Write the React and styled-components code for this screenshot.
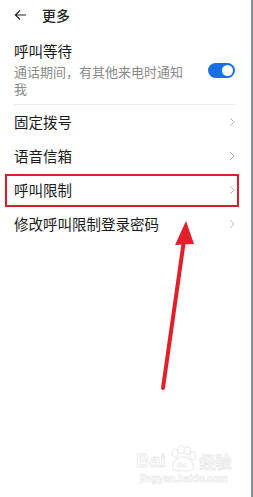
import styled, { createGlobalStyle } from "styled-components";

const GlobalStyle = createGlobalStyle`
  html, body {
    margin: 0;
    padding: 0;
    background: #fff;
  }
  body {
    font-family: "Noto Sans CJK SC", "Noto Sans", sans-serif;
    color: #1f1f1f;
  }
`;

const rows = [
  { label: "固定拨号" },
  { label: "语音信箱" },
  { label: "呼叫限制", marked: true },
  { label: "修改呼叫限制登录密码" },
];

const App = () => {
  return (
    <Page>
      <GlobalStyle />
      <Header>
        <BackIcon viewBox="0 0 14 12">
          <path d="M13 6H1.5M6.5 1L1.5 6l5 5" fill="none" stroke="#222" strokeWidth="1.3" />
        </BackIcon>
        <Title>更多</Title>
      </Header>

      <List>
        <SwitchRow>
          <div>
            <RowTitle>呼叫等待</RowTitle>
            <SubText>通话期间，有其他来电时通知我</SubText>
          </div>
          <Toggle>
            <Knob />
          </Toggle>
        </SwitchRow>
        <Divider />
        {rows.map((row) => (
          <Row key={row.label} $marked={row.marked}>
            <RowTitle>{row.label}</RowTitle>
            <Chevron viewBox="0 0 6 10">
              <path d="M1 1l4 4-4 4" fill="none" stroke="#b5b5b5" strokeWidth="1" />
            </Chevron>
          </Row>
        ))}
      </List>

      <Arrow viewBox="0 0 253 497">
        <line x1="163" y1="388" x2="184" y2="240" stroke="#e3202a" strokeWidth="4" strokeLinecap="round" />
        <polygon points="186,221 175,245 194,244" fill="#e3202a" />
      </Arrow>

      <Watermark>
        <Brand>
          <span>Bai</span>
          <Paw viewBox="0 0 34 30">
            <g fill="none" stroke="#ebebeb" strokeWidth="1.3">
              <ellipse cx="8" cy="9" rx="3.5" ry="4.5" />
              <ellipse cx="15" cy="5" rx="3.5" ry="4.5" />
              <ellipse cx="22" cy="6" rx="3.5" ry="4.5" />
              <ellipse cx="28" cy="12" rx="3.5" ry="4.5" />
              <path d="M5 25c0-7 6-12 12-12s12 5 12 12c0 3-3 4-6 4H11c-3 0-6-1-6-4z" />
            </g>
            <text x="10" y="25" fontSize="9" fill="#ebebeb" fontFamily="Liberation Sans, sans-serif" fontWeight="bold">du</text>
          </Paw>
          <span>经验</span>
        </Brand>
        <Domain>jingyan.baidu.com</Domain>
      </Watermark>
    </Page>
  );
};
export default App;

const Page = styled.div`
  position: relative;
  width: 251px;
  height: 497px;
  border-right: 2px solid #7f9595;
  overflow: hidden;
`;

const Header = styled.header`
  display: flex;
  align-items: center;
  gap: 15px;
  height: 30px;
  padding: 0 14px;
`;

const BackIcon = styled.svg`
  width: 13px;
  height: 12px;
`;

const Title = styled.div`
  font-size: 14px;
  font-weight: 500;
  color: #222;
`;

const List = styled.div`
  padding: 0 16px 0 14px;
`;

const SwitchRow = styled.div`
  display: flex;
  align-items: center;
  justify-content: space-between;
  gap: 22px;
  padding: 11px 0 7px;
`;

const RowTitle = styled.div`
  font-size: 14.5px;
  line-height: 20px;
  color: #1a1a1a;
`;

const SubText = styled.div`
  font-size: 13px;
  line-height: 17px;
  color: #8a8a8a;
  margin-top: 2px;
`;

const Toggle = styled.div`
  flex: none;
  display: flex;
  justify-content: flex-end;
  align-items: center;
  width: 27px;
  height: 15px;
  padding: 0 2px;
  box-sizing: border-box;
  border-radius: 8px;
  background: #1b6fe6;
  margin-top: 2px;
`;

const Knob = styled.div`
  width: 11px;
  height: 11px;
  border-radius: 50%;
  background: #fff;
`;

const Divider = styled.div`
  height: 1px;
  background: #ececec;
`;

const Row = styled.div`
  position: relative;
  display: flex;
  align-items: center;
  justify-content: space-between;
  height: 34px;

  &::after {
    content: "";
    display: ${(p) => (p.$marked ? "block" : "none")};
    position: absolute;
    top: 1px;
    bottom: 0;
    left: -9px;
    right: -4px;
    border: 2px solid #d9202b;
  }
`;

const Chevron = styled.svg`
  width: 6px;
  height: 10px;
`;

const Arrow = styled.svg`
  position: absolute;
  left: 0;
  top: 0;
  width: 253px;
  height: 497px;
  pointer-events: none;
`;

const Watermark = styled.div`
  position: absolute;
  left: 136px;
  top: 445px;
  display: flex;
  flex-direction: column;
  align-items: center;
`;

const Brand = styled.div`
  display: flex;
  align-items: flex-end;
  gap: 2px;
  color: #fff;
  font-family: "Liberation Sans", sans-serif;
  font-size: 19px;
  font-weight: bold;
  line-height: 22px;
  -webkit-text-stroke: 0.8px #e8e8e8;

  span:last-child {
    font-family: "Noto Sans CJK SC", sans-serif;
    font-size: 16px;
  }
`;

const Paw = styled.svg`
  width: 30px;
  height: 27px;
`;

const Domain = styled.div`
  font-family: "Liberation Sans", sans-serif;
  font-size: 10px;
  font-weight: bold;
  color: #fff;
  -webkit-text-stroke: 0.6px #e8e8e8;
  margin-top: 1px;
`;
